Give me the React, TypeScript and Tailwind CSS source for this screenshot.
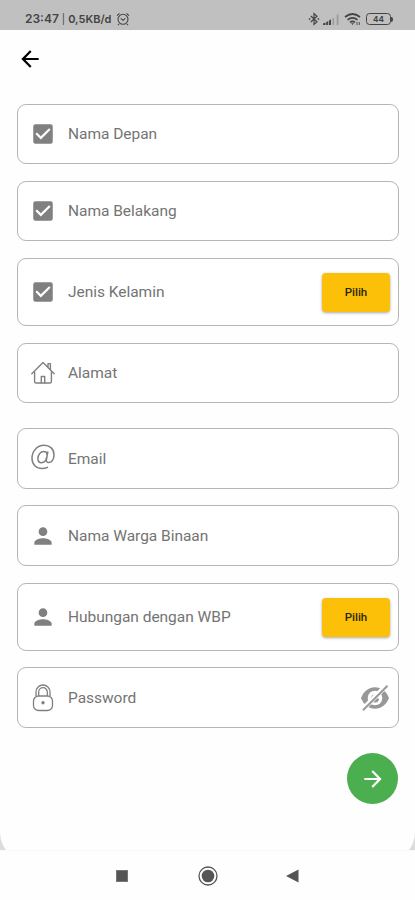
import type { ReactNode } from "react";
import {
  MdArrowBack,
  MdArrowForward,
  MdCheckBox,
  MdPerson,
} from "react-icons/md";

type Field = {
  label: string;
  icon: ReactNode;
  box: string;
  trailing?: ReactNode;
};

const HomeIcon = () => (
  <svg
    className="w-6 h-6"
    viewBox="0 0 24 24"
    fill="none"
    stroke="currentColor"
    strokeWidth="1.4"
    strokeLinejoin="round"
    strokeLinecap="round"
  >
    <path d="M3.6 11V20.400a1.600 1.600 0 0 0 1.600 1.600h13.600a1.600 1.600 0 0 0 1.600-1.600V11" />
    <path d="M.8 12.800 12 1.600l11.200 11.200M17 6V2.600h2.400v5.800" />
    <path d="M10.300 21.800v-6.300h3.400v6.300" />
  </svg>
);

const AtIcon = () => (
  <svg
    className="w-6 h-[26px] -mt-[3px]"
    viewBox="0 0 24 26"
    fill="none"
    stroke="currentColor"
    strokeWidth="1.500"
    strokeLinecap="round"
  >
    <path d="M16.500 23.300C14.800 24.200 13.200 24.500 11.300 24.500 5 24.500 1 20.400 1 14.300 1 7.200 6 1.300 13 1.300c6 0 10 3.800 10 9.500 0 4.600-2.300 7.800-5.300 7.800-2 0-2.600-1.400-2.300-3.200L16.800 8" />
    <path d="M16.300 10.500C15.900 8.600 14.600 7.600 12.700 7.600 9.400 7.600 6.900 10.900 6.900 14.500c0 2.500 1.300 4.200 3.500 4.200 2.700 0 4.700-2.400 5.200-5" />
  </svg>
);

const LockIcon = () => (
  <svg
    className="w-[22px] h-7"
    viewBox="0 0 22 28"
    fill="none"
    stroke="currentColor"
    strokeWidth="1.300"
  >
    <rect x="1.500" y="12" width="19" height="14.500" rx="5" />
    <path d="M4 12V8a7 7 0 0 1 14 0v4" />
    <path d="M6.700 12V8a4.300 4.300 0 0 1 8.600 0v4" />
    <circle cx="11" cy="18.800" r="1.700" fill="currentColor" stroke="none" />
  </svg>
);

const EyeOffIcon = () => (
  <svg className="w-[30px] h-[28px] text-[#989898]" viewBox="0 0 30 28">
    <path
      d="M1 14C3.500 7.500 8.500 3.200 15 3.200S26.500 7.500 29 14C26.500 20.500 21.500 24.800 15 24.800S3.500 20.500 1 14Z"
      fill="currentColor"
    />
    <circle cx="15" cy="14" r="7.300" fill="#fff" />
    <path d="M15 14v-3.500a4 4 0 1 0 4 4Z" fill="currentColor" />
    <path d="M2.500 25.500 27 1" stroke="#fff" strokeWidth="5" />
    <path d="M3 26.200 27.500 1.700" stroke="currentColor" strokeWidth="2" />
  </svg>
);

const PilihButton = () => (
  <button className="w-[68px] h-[39px] pt-[2px] rounded-[4px] bg-[#fdc009] text-[11.5px] font-medium text-[#2b2407] shadow-[0_1px_3px_rgba(0,0,0,0.35)]">
    Pilih
  </button>
);

const FIELDS: Field[] = [
  { label: "Nama Depan", icon: <MdCheckBox size={26} />, box: "h-[60px]" },
  {
    label: "Nama Belakang",
    icon: <MdCheckBox size={26} />,
    box: "h-[60px] mt-[17px]",
  },
  {
    label: "Jenis Kelamin",
    icon: <MdCheckBox size={26} />,
    box: "h-[68px] mt-[17px]",
    trailing: <PilihButton />,
  },
  { label: "Alamat", icon: <HomeIcon />, box: "h-[60px] mt-[17px]" },
  { label: "Email", icon: <AtIcon />, box: "h-[61px] mt-[25px]" },
  {
    label: "Nama Warga Binaan",
    icon: <MdPerson size={26} />,
    box: "h-[61px] mt-4",
  },
  {
    label: "Hubungan dengan WBP",
    icon: <MdPerson size={26} />,
    box: "h-[68px] mt-[17px]",
    trailing: <PilihButton />,
  },
  {
    label: "Password",
    icon: <LockIcon />,
    box: "h-[61px] mt-4",
    trailing: <EyeOffIcon />,
  },
];

const StatusBar = () => (
  <header className="flex items-center justify-between h-[30px] shrink-0 bg-[#c0c0c0] pl-[25px] pr-[22px] pt-2 text-[#444]">
    <div className="flex items-center gap-[3px] font-['Inter',sans-serif] text-[12px] leading-none whitespace-nowrap">
      <span className="font-semibold">23:47</span>
      <span className="text-[10px]">|</span>
      <span className="text-[11px] font-semibold">0,5KB/d</span>
      <svg
        className="w-[14px] h-[14px] ml-[2px]"
        viewBox="0 0 14 14"
        fill="none"
        stroke="currentColor"
        strokeWidth="1.100"
      >
        <circle cx="7" cy="7.300" r="5" />
        <path d="M1 3.600 3.500 1.400M13 3.600 10.500 1.400M4.700 6.300 7 8.300l2.300-2M3 12l-1 1.200M11 12l1 1.200" />
      </svg>
    </div>
    <div className="flex items-center">
      <svg
        className="w-3 h-[14px]"
        viewBox="0 0 12 14"
        fill="none"
        stroke="currentColor"
        strokeWidth="1.200"
      >
        <path d="m2.800 4 6.200 5.800L6 12.500v-11L9 4.200 2.800 10" />
        <path d="M.8 7h1.600M9.600 7h1.600" strokeWidth="1.600" />
      </svg>
      <svg className="w-4 h-3 ml-[3px]" viewBox="0 0 16 12" fill="currentColor">
        <path d="M0 12V10.500L2.500 9.600V12ZM3.200 12V9.200L5.200 8v4ZM6 12V7.500L8 6.300V12Z" />
        <path d="M9.500 12V5h1.600v7ZM13.700 12V1.500h1.800V12Z" opacity=".3" />
      </svg>
      <svg
        className="w-[17px] h-[14px] ml-[5px]"
        viewBox="0 0 17 14"
        fill="none"
        stroke="currentColor"
        strokeWidth="1.700"
      >
        <path d="M1 5Q8.500-1 16 5M3.500 7.800Q8.500 3.800 13.500 7.800M6 10.300Q8.500 8.300 11 10.300" />
        <path d="M7 11.200h3L8.500 13Z" fill="currentColor" stroke="none" />
        <path d="M13 10v3M15.300 10v3" strokeWidth=".9" />
      </svg>
      <div className="flex items-center ml-[5px]">
        <span className="flex items-center justify-center w-[25px] h-[12px] rounded-[3.500px] border-[1.500px] border-[#444] font-['Inter',sans-serif] text-[8px] leading-none font-bold">
          44
        </span>
        <span className="w-[2px] h-[5px] rounded-r bg-[#444]" />
      </div>
    </div>
  </header>
);

const NavBar = () => (
  <nav className="flex items-center h-[50px] shrink-0 bg-[#fefefe] border-t border-[#f8f8f8] pl-[116px] text-[#555]">
    <span className="w-3 h-3 bg-[#555] border border-[#777]" />
    <svg
      className="w-5 h-5 ml-[70px]"
      viewBox="0 0 20 20"
      fill="none"
      stroke="currentColor"
    >
      <circle cx="10" cy="10" r="9" strokeWidth="1.300" />
      <circle cx="10" cy="10" r="6.300" fill="currentColor" stroke="none" />
    </svg>
    <svg
      className="w-[13px] h-[14px] ml-[68px]"
      viewBox="0 0 13 14"
      fill="currentColor"
    >
      <path d="M0 7 12.500.5v13Z" />
    </svg>
  </nav>
);

export default function App() {
  return (
    <div className="flex flex-col w-[415px] h-[900px] overflow-hidden bg-[#dcdcdc] font-['Roboto',sans-serif]">
      <StatusBar />
      <div className="h-[820px] overflow-hidden">
        <main className="h-[832px] bg-[#fefefe] rounded-b-[30px] pt-4 px-[17px]">
          <button className="flex items-center justify-center w-[26px] h-[26px] text-black">
            <MdArrowBack size={26} />
          </button>

          <form className="flex flex-col mt-8 w-[382px]">
            {FIELDS.map(({ label, icon, box, trailing }) => (
              <label
                key={label}
                className={`flex items-center rounded-[9px] border border-[#b5b5b5] bg-white pl-[11px] pr-2 text-[#808080] ${box}`}
              >
                <span className="flex items-center justify-center w-7 h-7 pr-[1px]">
                  {icon}
                </span>
                <span className="ml-[11px] mt-[2px] flex-1 text-[15.5px] tracking-[-0.03px] text-[#747474]">
                  {label}
                </span>
                {trailing}
              </label>
            ))}
          </form>

          <div className="flex justify-end mt-[25px]">
            <button className="flex items-center justify-center w-[51px] h-[51px] rounded-full bg-[#4bae4f] text-white">
              <MdArrowForward size={26} />
            </button>
          </div>
        </main>
      </div>
      <NavBar />
    </div>
  );
}
